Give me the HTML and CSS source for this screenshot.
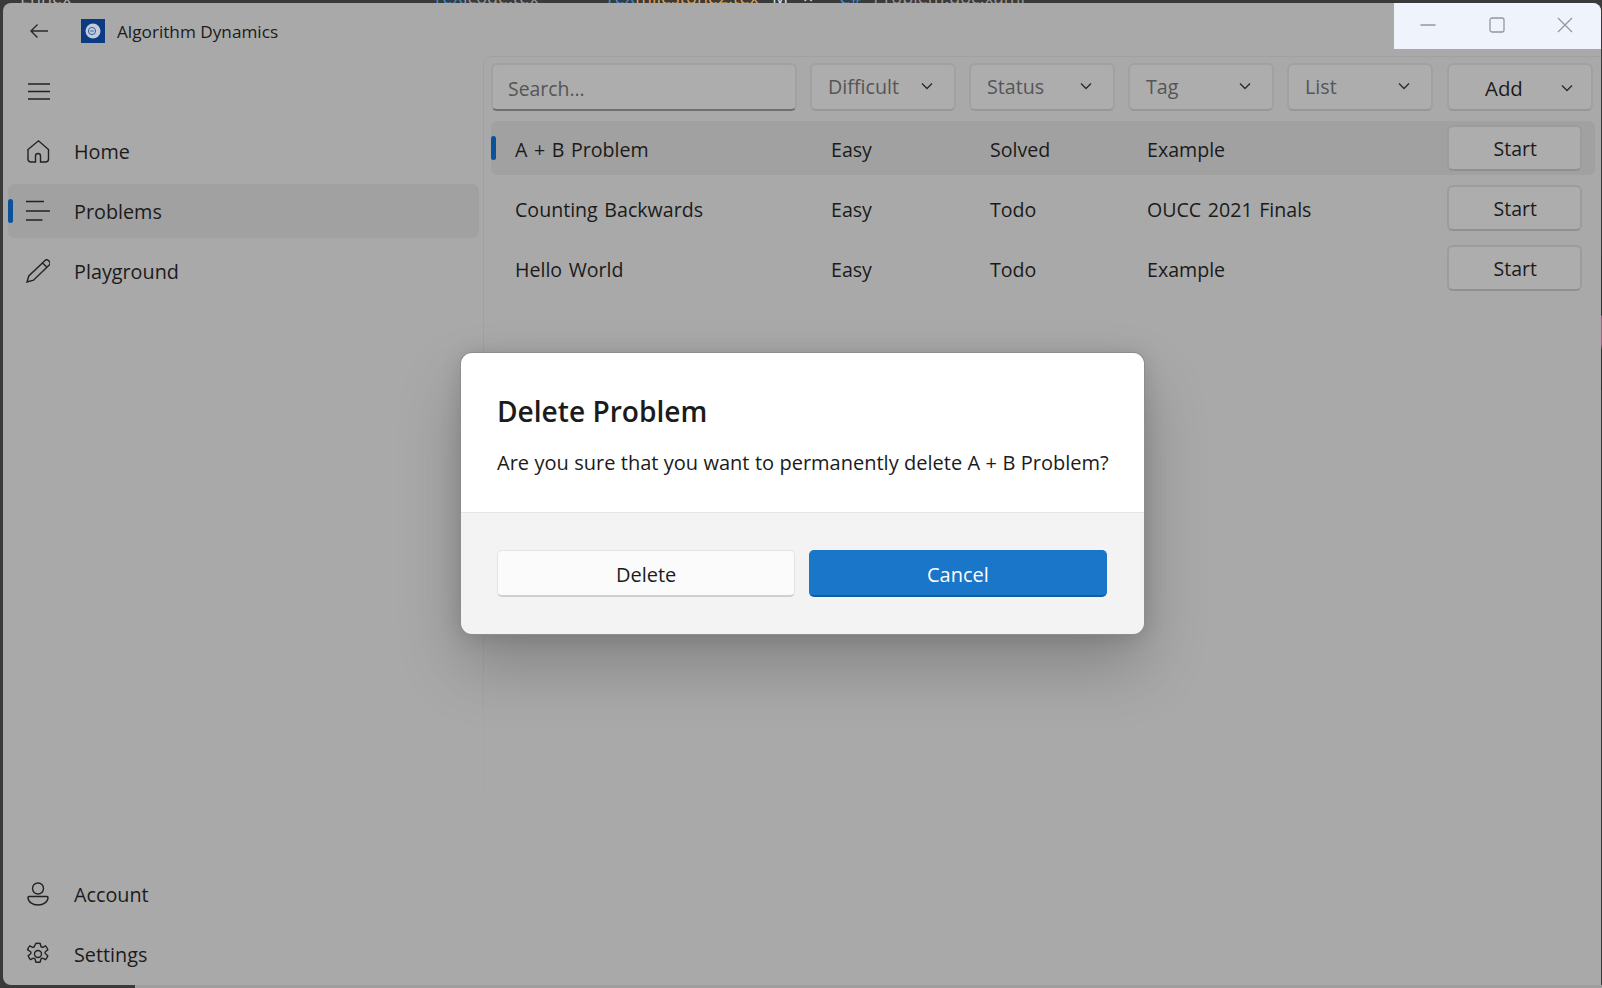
FILE: index.html
```html
<!DOCTYPE html>
<html lang="en-US">
<head>
<title>Algorithm Dynamics</title>
<meta charset="UTF-8">
<link rel="stylesheet" href="styles.css">
</head>
<body>
	<div class="behind">
		<span class="behind-text first">Ennex</span>
		<span class="behind-text tex second">TeX</span>
		<span class="behind-text">lcode.tex</span>
		<span class="behind-text tex third">TeX</span>
		<span class="behind-text orange">milestone2.tex</span>
		<span class="behind-text close-mark">M &times;</span>
		<span class="behind-text tex fourth">C#</span>
		<span class="behind-text">Problem.doc.xaml</span>
	</div>

	<div class="window">
		<div class="titlebar">
			<svg class="back" width="18" height="14" viewBox="0 0 18 14"><path d="M18 7H1M7.5 .6 1 7l6.5 6.4"/></svg>
			<svg class="logo" width="24" height="24" viewBox="0 0 24 24">
				<rect width="24" height="24" fill="#0b3a82"/>
				<circle cx="12" cy="12" r="7.5" fill="#c3ccd8"/>
				<circle cx="11" cy="12" r="3.6" fill="none" stroke="#2f62a8" stroke-width="1"/>
				<path d="M9.2 12h3.6" stroke="#2f62a8" stroke-width="1"/>
			</svg>
			<span class="app-title">Algorithm Dynamics</span>
			<div class="caption">
				<svg class="cap-icon" width="16" height="16" viewBox="0 0 16 16"><path d="M.5 8h15"/></svg>
				<svg class="cap-icon" width="16" height="16" viewBox="0 0 16 16"><rect x="1" y="1" width="14" height="14" rx="2"/></svg>
				<svg class="cap-icon" width="16" height="16" viewBox="0 0 16 16"><path d="M1 1l14 14M15 1 1 15"/></svg>
			</div>
		</div>

		<div class="main">
			<nav class="sidebar">
				<div class="nav-row">
					<span class="marker"></span>
					<svg class="nav-icon" width="24" height="24" viewBox="0 0 24 24"><path d="M2 5h22M2 12.5h22M2 20h22"/></svg>
				</div>
				<div class="nav-row">
					<span class="marker"></span>
					<svg class="nav-icon" width="24" height="24" viewBox="0 0 24 24"><path d="M4.5 23H9.5V17a2.5 2.5 0 0 1 5 0V23H20a3 3 0 0 0 2.500-3V10.500L12.500 1.800 2 10.500V20a3 3 0 0 0 2.500 3z"/></svg>
					<span class="nav-label">Home</span>
				</div>
				<div class="nav-row active">
					<span class="marker"></span>
					<svg class="nav-icon" width="24" height="24" viewBox="0 0 24 24"><path d="M0 2.500h18M0 12h24M0 21h16.500"/></svg>
					<span class="nav-label">Problems</span>
				</div>
				<div class="nav-row">
					<span class="marker"></span>
					<svg class="nav-icon" width="24" height="24" viewBox="0 0 24 24"><path d="M1 23l1.800-6L18.500 2a3 3 0 0 1 4.500 4.300L7.500 21.200zM16.500 4l4.500 4.300"/></svg>
					<span class="nav-label">Playground</span>
				</div>
				<div class="nav-row push">
					<span class="marker"></span>
					<svg class="nav-icon" width="24" height="24" viewBox="0 0 24 24"><circle cx="12" cy="6.500" r="5.500"/><path d="M3 14.500H21a1 1 0 0 1 1 1c0 4.500-4.500 7.500-10 7.500S2 20 2 15.500a1 1 0 0 1 1-1z"/></svg>
					<span class="nav-label">Account</span>
				</div>
				<div class="nav-row">
					<span class="marker"></span>
					<svg class="nav-icon" width="24" height="24" viewBox="0 0 24 24"><circle cx="12" cy="12" r="3.500"/><path d="M9.800 1.500a11 11 0 0 1 4.400 0l.7 2.700a1.500 1.500 0 0 0 2.200.9l2.500-1.200a11 11 0 0 1 2.200 3.800l-2.100 1.800a1.500 1.500 0 0 0 0 2.500l2.100 1.800a11 11 0 0 1-2.200 3.800l-2.500-1.200a1.500 1.500 0 0 0-2.200.9l-.7 2.700a11 11 0 0 1-4.400 0l-.7-2.700a1.500 1.500 0 0 0-2.200-.9l-2.500 1.200a11 11 0 0 1-2.200-3.800l2.100-1.800a1.500 1.500 0 0 0 0-2.500L1.500 7.700a11 11 0 0 1 2.200-3.800l2.500 1.200a1.500 1.500 0 0 0 2.200-.9z"/></svg>
					<span class="nav-label">Settings</span>
				</div>
			</nav>

			<div class="content">
				<div class="toolbar">
					<div class="search">Search...</div>
					<div class="dropdown">Difficult<svg class="chevron" width="12" height="8" viewBox="0 0 12 8"><path d="M1 1.500l5 5 5-5"/></svg></div>
					<div class="dropdown">Status<svg class="chevron" width="12" height="8" viewBox="0 0 12 8"><path d="M1 1.500l5 5 5-5"/></svg></div>
					<div class="dropdown">Tag<svg class="chevron" width="12" height="8" viewBox="0 0 12 8"><path d="M1 1.500l5 5 5-5"/></svg></div>
					<div class="dropdown">List<svg class="chevron" width="12" height="8" viewBox="0 0 12 8"><path d="M1 1.500l5 5 5-5"/></svg></div>
					<div class="dropdown add"><span class="add-label">Add</span><svg class="chevron" width="12" height="8" viewBox="0 0 12 8"><path d="M1 1.500l5 5 5-5"/></svg></div>
				</div>

				<div class="problem selected">
					<span class="marker"></span>
					<span class="cell name">A + B Problem</span><span class="cell">Easy</span><span class="cell">Solved</span><span class="cell">Example</span>
					<div class="start">Start</div>
				</div>
				<div class="problem">
					<span class="marker"></span>
					<span class="cell name">Counting Backwards</span><span class="cell">Easy</span><span class="cell">Todo</span><span class="cell">OUCC 2021 Finals</span>
					<div class="start">Start</div>
				</div>
				<div class="problem">
					<span class="marker"></span>
					<span class="cell name">Hello World</span><span class="cell">Easy</span><span class="cell">Todo</span><span class="cell">Example</span>
					<div class="start">Start</div>
				</div>
			</div>
		</div>
	</div>
	<div class="bottom-edge"><span class="bottom-dark"></span></div>
	<div class="right-edge"></div>

	<div class="dialog">
		<div class="dialog-body">
			<h2>Delete Problem</h2>
			<p>Are you sure that you want to permanently delete A + B Problem?</p>
		</div>
		<div class="dialog-footer">
			<div class="dlg-btn">Delete</div>
			<div class="dlg-btn primary">Cancel</div>
		</div>
	</div>
</body>
</html>
```

FILE: styles.css
```css
html, body {
	margin: 0;
	height: 988px;
	overflow: hidden;
}

body {
	position: relative;
	background-color: #3a3a3a;
	font-family: "Open Sans", "Noto Sans", sans-serif;
	color: #1b1b1b;
}

/* bits of the editor behind the window */
.behind {
	display: flex;
	height: 3px;
	overflow: hidden;
	font-size: 18px;
	line-height: 16px;
	color: #9a9a9a;
}

.behind-text {
	margin-top: -11px;
	white-space: nowrap;
}

.behind-text.first { margin-left: 20px; color: #b0b0b0; }
.behind-text.tex { color: #3d8fd0; }
.behind-text.second { margin-left: 361px; }
.behind-text.third { margin-left: 66px; }
.behind-text.fourth { margin-left: 26px; margin-right: 11px; }
.behind-text.orange { color: #d9a65c; }
.behind-text.close-mark { margin-left: 13px; color: #ddd; word-spacing: 10px; }

.window {
	display: flex;
	flex-direction: column;
	height: 982px;
	margin-left: 3px;
	width: 1598px;
	background-color: #a9a9a9;
	border-radius: 8px 8px 0 8px;
	overflow: hidden;
}

.bottom-edge {
	height: 3px;
	background-color: #9d9d9d;
}

.bottom-dark {
	display: block;
	width: 135px;
	height: 3px;
	background-color: #3a3a3a;
}

.right-edge {
	position: absolute;
	right: 0;
	top: 256px;
	width: 1px;
	height: 134px;
	background: linear-gradient(#333 0, #333 44%, #a0607f 45%, #a0607f 66%, #333 70%);
}

.titlebar {
	display: flex;
	align-items: flex-start;
	height: 53px;
	flex: none;
}

.back {
	margin: 21px 0 0 27px;
	fill: none;
	stroke: #2a2a2a;
	stroke-width: 1.4;
}

.logo {
	margin: 16px 0 0 33px;
}

.app-title {
	margin: 16px 0 0 12px;
	font-size: 17.2px;
	line-height: 26px;
}

.caption {
	display: flex;
	justify-content: space-between;
	align-items: center;
	width: 207px;
	height: 46px;
	margin-left: auto;
	padding: 0 28px 2px 26px;
	box-sizing: border-box;
	background-color: #eff3fb;
}

.cap-icon {
	fill: none;
	stroke: #93979d;
	stroke-width: 1.3;
}

.main {
	display: flex;
	flex: 1;
	min-height: 0;
}

.sidebar {
	display: flex;
	flex-direction: column;
	gap: 6px;
	width: 471px;
	margin: 0 4px 0 5px;
	padding: 8px 0 4px;
	box-sizing: border-box;
}

.nav-row {
	display: flex;
	align-items: center;
	height: 54px;
	flex: none;
	border-radius: 7px;
}

.nav-row.push {
	margin-top: auto;
}

.nav-row.active {
	background-color: #a1a1a1;
}

.marker {
	width: 5px;
	height: 24px;
	border-radius: 3px;
	flex: none;
}

.active .marker, .selected .marker {
	background-color: #0a5299;
}

.nav-icon {
	margin-left: 13px;
	flex: none;
	fill: none;
	stroke: #222;
	stroke-width: 1.4;
}

.nav-label {
	margin-left: 24px;
	font-size: 19.8px;
}

.content {
	position: relative;
	flex: 1;
	min-width: 0;
	padding: 6px 6px 0 7px;
	border-left: 1.5px solid #a1a1a1;
	border-top: 1.5px solid #a1a1a1;
	border-top-left-radius: 9px;
}

/* the pane's left line fades out towards the bottom */
.content::after {
	content: "";
	position: absolute;
	left: -1.5px;
	top: 560px;
	bottom: 0;
	width: 1.5px;
	background: linear-gradient(rgba(169, 169, 169, 0), #a9a9a9 230px);
}

.toolbar {
	display: flex;
	gap: 13px;
	margin-bottom: 10px;
}

.search, .dropdown {
	display: flex;
	align-items: center;
	height: 48px;
	flex: none;
	box-sizing: border-box;
	border: 2px solid #a1a1a1;
	border-bottom-color: #979797;
	border-radius: 6px;
	background-color: #adadad;
	font-size: 19.7px;
	color: #555;
}

.search {
	width: 306px;
	padding: 2px 0 0 15px;
	font-size: 19.4px;
	border-bottom-color: #6f6f6f;
}

.dropdown {
	width: 146px;
	padding: 0 21px 2px 16px;
	justify-content: space-between;
}

.dropdown.add {
	width: 146px;
	margin-left: 1px;
	padding: 2px 18px 0 36px;
	font-size: 20.4px;
	color: #1b1b1b;
}

.chevron {
	fill: none;
	stroke: #2a2a2a;
	stroke-width: 1.3;
}

.problem {
	display: grid;
	grid-template-columns: 5px 335px 159px 157px 300px 134.5px;
	align-items: center;
	height: 54px;
	margin-bottom: 6px;
	border-radius: 6px;
	font-size: 19.6px;
	word-spacing: 1.5px;
}

.cell {
	margin-top: 2px;
}

.name {
	padding-left: 19px;
}

.selected {
	background-color: #a1a1a1;
}

.start {
	display: flex;
	align-items: center;
	justify-content: center;
	height: 46px;
	padding-left: 2px;
	box-sizing: border-box;
	border: 2px solid #9c9c9c;
	border-bottom-color: #909090;
	border-radius: 6px;
	background-color: #adadad;
	font-size: 19.5px;
}

.dialog {
	position: absolute;
	left: 461px;
	top: 353px;
	width: 683px;
	height: 281px;
	display: flex;
	flex-direction: column;
	border-radius: 11px;
	overflow: hidden;
	box-shadow: 0 0 0 1px #8d8d8d, 0 32px 64px rgba(0, 0, 0, .22), 0 2px 21px rgba(0, 0, 0, .14);
}

.dialog-body {
	height: 159px;
	flex: none;
	padding: 0 36px 0 37px;
	box-sizing: border-box;
	background-color: #fff;
}

.dialog-body h2 {
	margin: 0 0 0 -1px;
	padding-top: 39px;
	font-size: 28.1px;
	line-height: 38px;
	font-weight: 600;
}

.dialog-body p {
	margin: 19px 0 0 -1px;
	font-size: 20px;
	line-height: 28px;
	word-spacing: .2px;
	white-space: nowrap;
}

.dialog-footer {
	flex: 1;
	display: flex;
	gap: 13.5px;
	padding: 37px 37px 0 36px;
	background-color: #f3f3f3;
	border-top: 1px solid #e5e5e5;
}

.dlg-btn {
	flex: 1;
	display: flex;
	align-items: center;
	justify-content: center;
	height: 47px;
	padding-top: 2px;
	box-sizing: border-box;
	border: 1px solid #e3e3e3;
	border-bottom: 2px solid #cfcfcf;
	border-radius: 5px;
	background-color: #fbfbfb;
	font-size: 20px;
}

.dlg-btn.primary {
	background-color: #1a76c9;
	border-color: #1a76c9;
	border-bottom-color: #135ea3;
	color: #fff;
}
```
